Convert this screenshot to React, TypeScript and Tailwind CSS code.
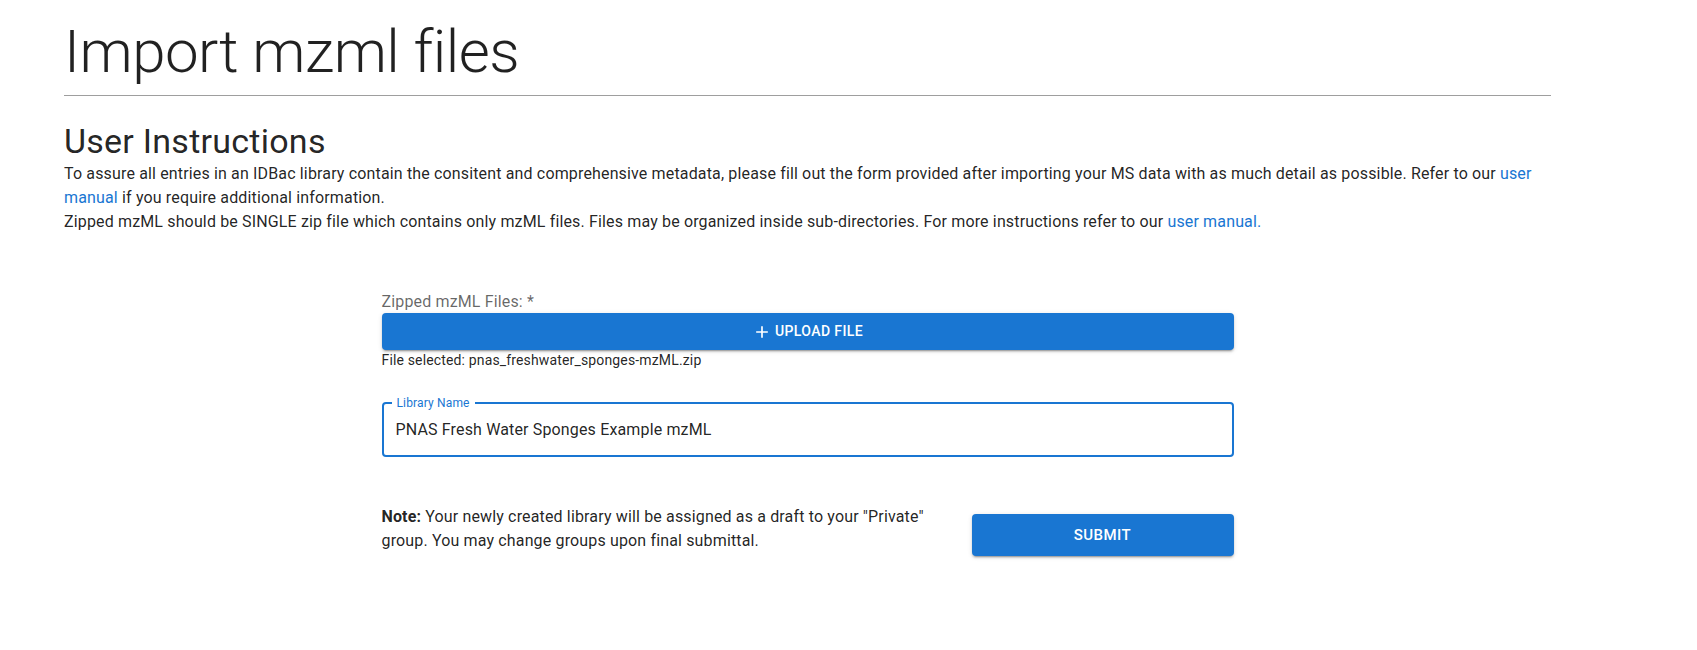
import { useState } from "react";

const font = "[font-family:Roboto,'Noto_Sans',Arial,sans-serif]";

function PlusIcon() {
  return (
    <svg viewBox="0 0 24 24" className="h-5 w-5 fill-current" aria-hidden="true">
      <path d="M19 13h-6v6h-2v-6H5v-2h6V5h2v6h6z" />
    </svg>
  );
}

export default function App() {
  const [libraryName, setLibraryName] = useState("PNAS Fresh Water Sponges Example mzML");
  const fileName = "pnas_freshwater_sponges-mzML.zip";

  return (
    <div className={`min-h-[650px] bg-white text-[rgba(0,0,0,0.87)] ${font}`}>
      <div className="ml-[64px] w-[1487px]">
        <h1 className="mt-[16px] text-[60px] font-light leading-[72px] tracking-[-0.5px]">
          Import mzml files
        </h1>
        <hr className="mt-[7px] border-0 border-t border-[#9e9e9e]" />

        <h2 className="mt-[24px] text-[34px] font-normal leading-[42px] tracking-[0.25px]">
          User Instructions
        </h2>
        <p className="text-[16px] leading-[24px] tracking-[0.15px]">
          To assure all entries in an IDBac library contain the consitent and comprehensive metadata,
          please fill out the form provided after importing your MS data with as much detail as possible.
          Refer to our{" "}
          <a href="#" className="text-[#1976d2]">
            user manual
          </a>{" "}
          if you require additional information.
          <br />
          Zipped mzML should be SINGLE zip file which contains only mzML files. Files may be organized
          inside sub-directories. For more instructions refer to our{" "}
          <a href="#" className="text-[#1976d2]">
            user manual.
          </a>
        </p>

        <form className="mx-auto mt-[56px] w-[852px]" onSubmit={(e) => e.preventDefault()}>
          <label className="block text-[16px] leading-[23px] tracking-[0.15px] text-[rgba(0,0,0,0.6)]">
            Zipped mzML Files: *
          </label>
          <button
            type="button"
            className="flex h-[37px] w-full items-center justify-center gap-[3px] rounded-[4px] bg-[#1976d2] text-[14px] font-medium uppercase tracking-[0.4px] text-white shadow-[0_3px_1px_-2px_rgba(0,0,0,0.2),0_2px_2px_0_rgba(0,0,0,0.14),0_1px_5px_0_rgba(0,0,0,0.12)]"
          >
            <PlusIcon />
            Upload file
          </button>
          <p className="text-[14px] leading-[20px] tracking-[0.15px]">File selected: {fileName}</p>

          <div className="relative mt-[32px] flex h-[55px] items-center rounded-[4px] border-2 border-[#1976d2]">
            <span className="absolute -top-[9px] left-[8px] bg-white px-[5px] text-[12px] leading-[16px] tracking-[0.15px] text-[#1976d2]">
              Library Name
            </span>
            <input
              value={libraryName}
              onChange={(e) => setLibraryName(e.target.value)}
              className="w-full bg-transparent px-[12px] text-[16px] leading-[23px] tracking-[0.15px] text-[rgba(0,0,0,0.87)] outline-none"
            />
          </div>

          <div className="mt-[48px] flex items-start">
            <p className="w-[568px] text-[16px] leading-[24px] tracking-[0.15px]">
              <strong className="font-bold">Note:</strong> Your newly created library will be assigned as
              a draft to your "Private" group. You may change groups upon final submittal.
            </p>
            <button
              type="submit"
              className="ml-auto mt-[9px] h-[42px] w-[262px] rounded-[4px] bg-[#1976d2] text-[15px] font-medium uppercase tracking-[0.46px] text-white shadow-[0_3px_1px_-2px_rgba(0,0,0,0.2),0_2px_2px_0_rgba(0,0,0,0.14),0_1px_5px_0_rgba(0,0,0,0.12)]"
            >
              Submit
            </button>
          </div>
        </form>
      </div>
    </div>
  );
}
